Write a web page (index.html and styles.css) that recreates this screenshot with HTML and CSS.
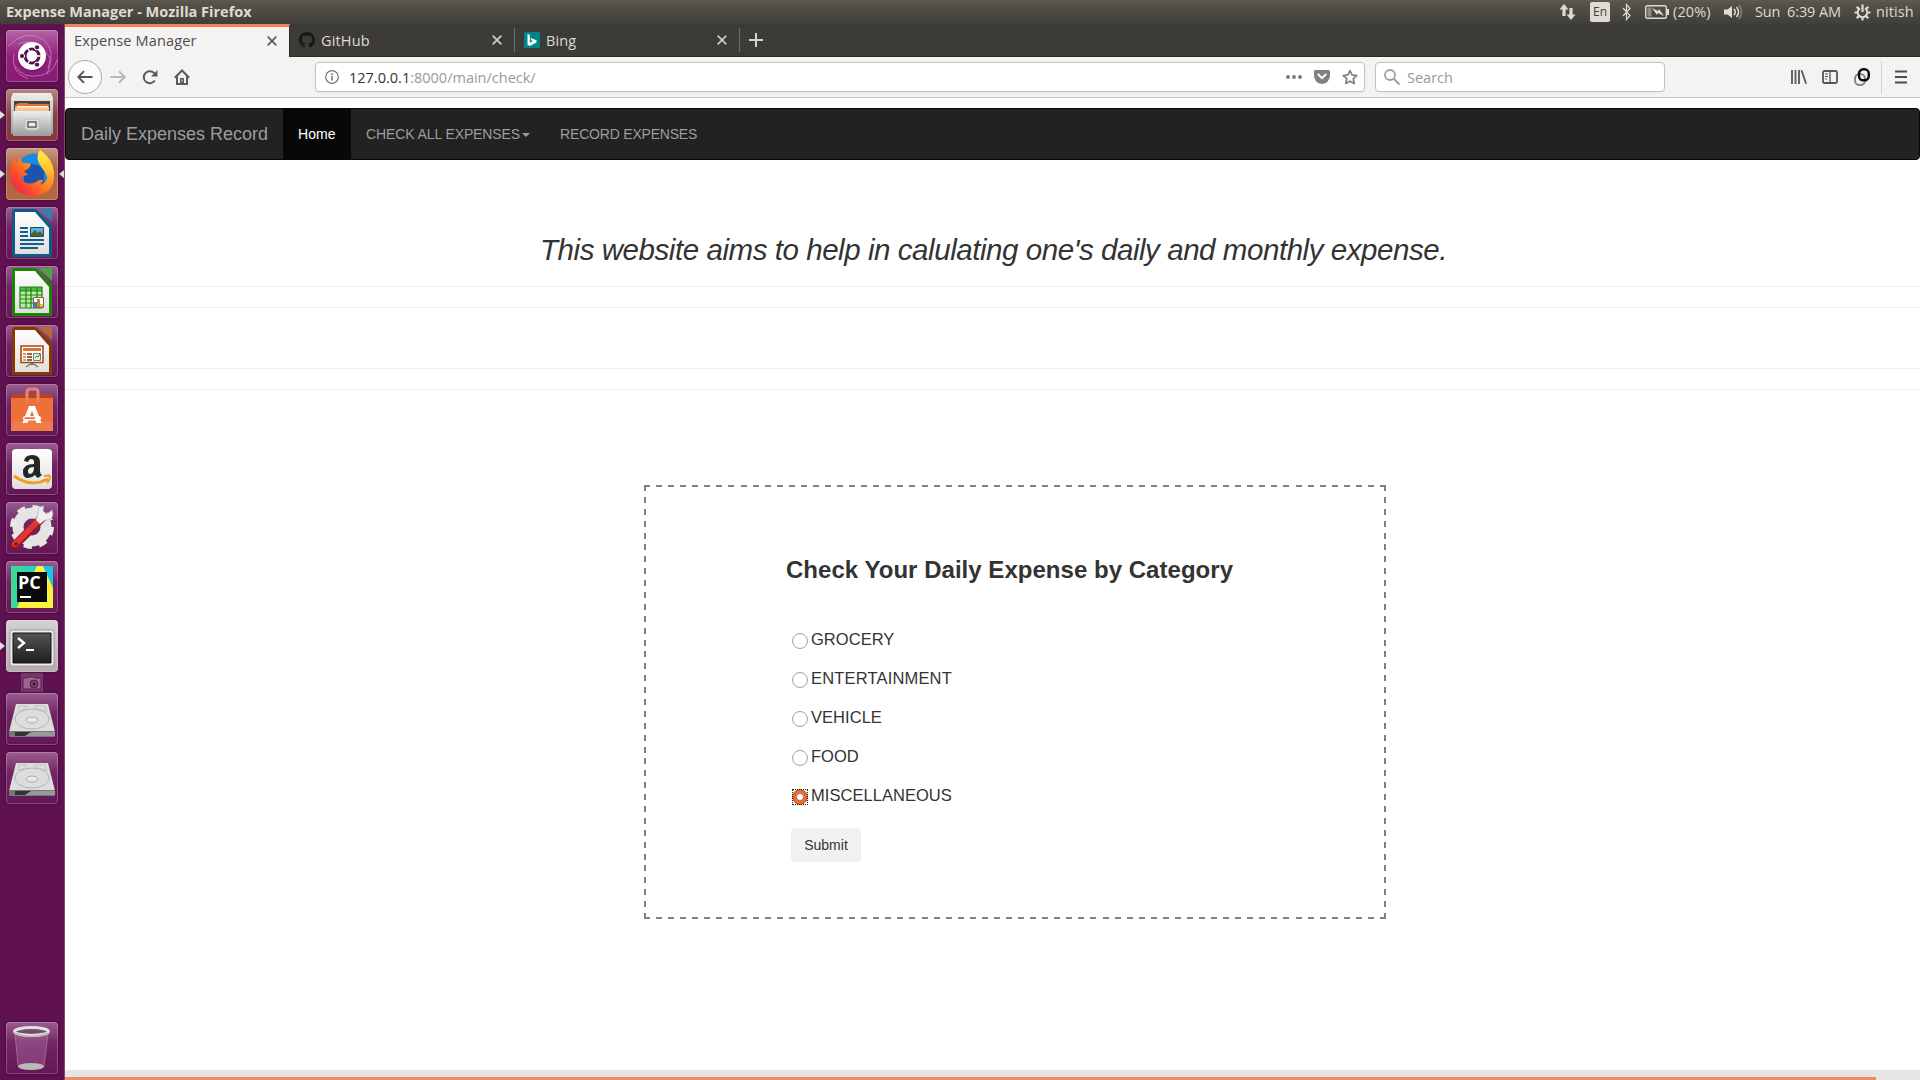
FILE: index.html
```html
<!DOCTYPE html>
<html lang="en">
<head>
<meta charset="utf-8">
<title>Expense Manager</title>
<link rel="stylesheet" href="styles.css">
</head>
<body>
<header class="panel">
  <span class="panel-title">Expense Manager - Mozilla Firefox</span>
  <div class="indicators">
    <svg class="ind-net" width="17" height="16" viewBox="0 0 17 16"><path d="M5 0 9.500 5.500H6.600V12H3.400V5.500H.5zM12 16 7.500 10.500h2.900V4h3.200v6.500h2.900z" fill="#dfdbd2"/></svg>
    <span class="ind-lang">En</span>
    <svg class="ind-bt" width="10" height="18" viewBox="0 0 10 18"><path d="M1 5l7 7.500L4.500 16.500V1.500L8 5.500 1 13" fill="none" stroke="#dfdbd2" stroke-width="1.200"/></svg>
    <svg class="ind-bat" width="24" height="14" viewBox="0 0 24 14"><rect x=".7" y=".7" width="20.600" height="12.600" rx="1.500" fill="none" stroke="#dfdbd2" stroke-width="1.400"/><path d="M22 4h2v6h-2z" fill="#dfdbd2"/><path d="M2.500 2.500h4v9h-4z" fill="#8f8c84"/><path d="M7 3l6 3 1-2 5 7-6-3-1 2z" fill="#dfdbd2"/></svg>
    <span class="ind-pct">(20%)</span>
    <svg class="ind-vol" width="20" height="16" viewBox="0 0 20 16"><path d="M1 5.500h3.500L9 2v12l-4.500-3.500H1z" fill="#dfdbd2"/><path d="M11 5q2.500 3 0 6M13.500 3q4 5 0 10" fill="none" stroke="#dfdbd2" stroke-width="1.500"/><path d="M16 1q5 7 0 14" fill="none" stroke="#85827a" stroke-width="1.500"/></svg>
    <span class="ind-day">Sun</span>
    <span class="ind-time">6:39 AM</span>
    <svg class="ind-gear" width="17" height="17" viewBox="0 0 17 17"><path d="M6 4.300a4.800 4.800 0 1 0 5 0" fill="none" stroke="#dfdbd2" stroke-width="2"/><path d="M8.500.500v7.500M.5 8.500h3M13.500 8.500h3M2.700 2.700l2.300 2.300M14.300 2.700 12 5M2.700 14.300 5 12M14.300 14.300 12 12M8.500 13.500v3" stroke="#dfdbd2" stroke-width="2.200"/></svg>
    <span class="ind-user">nitish</span>
  </div>
</header>
<div class="desktop">
<nav class="launcher">
  <svg width="0" height="0" class="defs"><defs>
    <linearGradient id="silver" x1="0" y1="0" x2="0" y2="1"><stop offset="0" stop-color="#eee"/><stop offset="1" stop-color="#9c9c9c"/></linearGradient>
    <linearGradient id="paper" x1="0" y1="0" x2="0" y2="1"><stop offset="0" stop-color="#fff"/><stop offset="1" stop-color="#dedede"/></linearGradient>
    <linearGradient id="flame" x1="1" y1="0" x2="0" y2="1"><stop offset="0" stop-color="#fff04a"/><stop offset=".4" stop-color="#ff9a1c"/><stop offset=".7" stop-color="#ff4a2b"/><stop offset="1" stop-color="#e31566"/></linearGradient>
    <linearGradient id="tail" x1="0" y1="0" x2="0" y2="1"><stop offset="0" stop-color="#fff04a"/><stop offset=".5" stop-color="#ffc52c"/><stop offset="1" stop-color="#ff7a22"/></linearGradient>
    <linearGradient id="screen" x1="0" y1="0" x2="0" y2="1"><stop offset="0" stop-color="#555"/><stop offset="1" stop-color="#1e1e1e"/></linearGradient>
    <linearGradient id="pych" x1="0" y1="0" x2="1" y2="0"><stop offset="0" stop-color="#3ddc91"/><stop offset="1" stop-color="#19c8e0"/></linearGradient>
  </defs></svg>
  <div class="tile tile-dash"><svg width="52" height="52" viewBox="0 0 52 52"><g fill="none" stroke="#e3a5d4" stroke-opacity=".55"><path d="M2 16Q20-2 38 10Q50 22 42 38"/><path d="M12 14Q30 6 44 28Q45 36 41 44"/><path d="M8 24Q4 42 22 49M9 36Q18 50 36 45Q48 42 51 30"/></g><circle cx="26" cy="27" r="14.500" fill="#5a114c" opacity=".5"/><circle cx="26" cy="26" r="14" fill="#fff"/><circle cx="26" cy="26" r="7" fill="none" stroke="#5a114c" stroke-width="3.200"/><path d="M26 26H36M26 26l-5-9M26 26l-5 9" stroke="#fff" stroke-width="1.500"/><circle cx="26" cy="26" r="5.400" fill="#fff"/><g fill="#5a114c" stroke="#fff"><circle cx="16" cy="26" r="2.600"/><circle cx="31" cy="17.400" r="2.600"/><circle cx="31" cy="34.600" r="2.600"/></g></svg></div>
  <div class="tile tile-files running"><svg width="52" height="52" viewBox="0 0 52 52"><path d="M7 4h38l2 5v36H5V9z" fill="url(#silver)"/><path d="M8 12h36v12H8z" fill="#444"/><path d="M9 16l4-2h8l2 1h20v8H9z" fill="#e5713a"/><path d="M9 18h34v4H9z" fill="#f6c490"/><path d="M11 17h31v1.500H11z" fill="#fff3e0"/><path d="M7 22h38v25H7z" fill="url(#silver)"/><rect x="19" y="30" width="14" height="11" rx="2" fill="#ddd" stroke="#bbb"/><rect x="22" y="33" width="8" height="5" fill="#eee" stroke="#555" stroke-width="1.400"/></svg></div>
  <div class="tile tile-firefox running focused"><svg width="52" height="52" viewBox="0 0 52 52"><circle cx="28" cy="22" r="16.500" fill="#1889e4"/><path d="M18 18Q28 12 38 22v14H18z" fill="#1b54ae"/><path d="M34 2Q47 11 48 25Q49 47 26 48Q4 46 4 25Q5 15 9 9l1 6 5-5 1 5q4-1 9 1-1 5-7 7l4 4q-6 0-6 5 6 6 14 2 4-3 7-2-1 4-5 5 9-1 10-10 1-8-5-14Q29 9 34 2z" fill="url(#flame)"/><path d="M34 2Q47 11 48 25 48 34 43 40 43 28 36 20 28 10 34 2z" fill="url(#tail)"/></svg></div>
  <div class="tile"><svg width="52" height="52" viewBox="0 0 52 52"><path d="M8 2h22l16 17v31H6V4z" fill="#0e5b88"/><path d="M33 2h13v13z" fill="#2e83ae"/><path d="M9 5h20l14 16v26H9z" fill="url(#paper)"/><path d="M14 21h8M14 25h8M14 29h8M14 33h24M14 37h24M14 41h18" stroke="#155e8b" stroke-width="2"/><path d="M24.500 20.500h13v9h-13z" fill="#54b5e6" stroke="#164c6b"/><path d="M25 29v-2l4-4 3 3 2-2 3 3v2z" fill="#55612d"/></svg></div>
  <div class="tile"><svg width="52" height="52" viewBox="0 0 52 52"><path d="M8 2h22l16 17v31H6V4z" fill="#1c8506"/><path d="M33 2h13v13z" fill="#4ba83d"/><path d="M9 5h20l14 16v26H9z" fill="url(#paper)"/><path d="M14 21h22v21H14z" fill="#b9eaac"/><path d="M14 21h22v4H14z" fill="#54b84b"/><path d="M14 21h22v21H14zM14 25h22M14 29h22M14 33h22M14 37h22M20 21v21M25 21v21M31 21v21" fill="none" stroke="#1c8506" stroke-width="1.200"/><path d="M27.500 31.500h10v10h-10z" fill="#fff" stroke="#666"/><path d="M28 36h3v5h-3z" fill="#3083c6"/><path d="M31 33h3v8h-3z" fill="#e17525"/><path d="M34 38h3v3h-3z" fill="#ecc414"/></svg></div>
  <div class="tile"><svg width="52" height="52" viewBox="0 0 52 52"><path d="M8 2h22l16 17v31H6V4z" fill="#873900"/><path d="M33 2h13v13z" fill="#b76a38"/><path d="M9 5h20l14 16v26H9z" fill="url(#paper)"/><path d="M26 38l-6 4M26 38l6 4M26 38v2" stroke="#777" stroke-width="1.500"/><path d="M15 21h22v16.500H15z" fill="#fff" stroke="#a84a16" stroke-width="1.600"/><path d="M17 23h18v3H17z" fill="#dc7135"/><path d="M17 29h3M17 32h3M17 35h3" stroke="#dc7135" stroke-width="1.500"/><path d="M21 29h5M21 32h5M21 35h5" stroke="#7a3200" stroke-width="1.500"/><path d="M27.500 28.500h7v7h-7z" fill="#def2d9" stroke="#777"/><path d="M29 33l2-2 1 1 2-3" fill="none" stroke="#2d8a22"/></svg></div>
  <div class="tile"><svg width="52" height="52" viewBox="0 0 52 52"><path d="M5 14l2-4h38l2 4z" fill="#b34725"/><path d="M5 14h42v33H5z" fill="#ee6f37"/><path d="M5 37h42v10H5z" fill="#f07c47"/><path d="M21 18V8q0-3 3-3h5q3 0 3 3v10" fill="none" stroke="#e98463" stroke-width="3"/><path d="M23 22h6l6.500 17h-5l-4.500-12.500L21.500 39h-5z" fill="#fff"/><rect x="17" y="32" width="18" height="4.500" rx="2" fill="#fff"/><path d="M18.500 34.200h10.500" stroke="#ee6f37" stroke-width="1.800"/></svg></div>
  <div class="tile"><svg width="52" height="52" viewBox="0 0 52 52"><rect x="6" y="6" width="40" height="40" rx="4" fill="url(#paper)"/><path d="M18 18q1-6 8-6 8 0 8 7v9q0 3 2 4l-4 3q-2-1-3-3-3 3-7 3-5 0-5-6 0-8 11-8v-2q0-3-3-3-2 0-3 3zM28 24q-6 0-6 4 0 3 2 3 4 0 4-7z" fill="#252525"/><path d="M8 33q17 12 34 3" fill="none" stroke="#f49b1c" stroke-width="2.800"/><path d="M38 33q6-1 6 0 0 4-3 7" fill="none" stroke="#f49b1c" stroke-width="1.800"/></svg></div>
  <div class="tile"><svg width="52" height="52" viewBox="0 0 52 52"><circle cx="26" cy="25" r="14" fill="none" stroke="#e4e4e4" stroke-width="11"/><circle cx="26" cy="25" r="19.500" fill="none" stroke="#e8e8e8" stroke-width="5" stroke-dasharray="8 7.300"/><path d="M9 43 36 16" stroke="#9d1719" stroke-width="8.500" stroke-linecap="round"/><path d="M9 42 34 17" stroke="#d93835" stroke-width="6" stroke-linecap="round"/><path d="M30 18l4 4 5-4q7 1 8-6l-1-4-5 4-4-3 1-5q-7 0-6 8z" fill="#eee" stroke="#aaa" stroke-width=".7"/><circle cx="10" cy="42" r="1.800" fill="#7d1111"/></svg></div>
  <div class="tile"><svg width="52" height="52" viewBox="0 0 52 52"><path d="M5 5h42v42H5z" fill="url(#pych)"/><path d="M31 5h6l10 20v22H11z" fill="#fcf23d"/><path d="M37 5h10v22z" fill="#1bc5e2"/><path d="M11 11h30v30H11z" fill="#0a0a0a"/><path d="M14 36h11" stroke="#fff" stroke-width="2"/><text x="12" y="28" class="pc">PC</text></svg></div>
  <div class="tile tile-term running"><svg width="52" height="52" viewBox="0 0 52 52"><rect x="4" y="10" width="44" height="36" rx="2" fill="#eee" stroke="#999"/><path d="M7 13h38v30H7z" fill="url(#screen)" stroke="#111"/><path d="M12 18l6 5-6 5" fill="none" stroke="#fff" stroke-width="2.400"/><path d="M20 30h8" stroke="#fff" stroke-width="2"/></svg></div>
  <svg class="mini" width="22" height="19" viewBox="0 0 22 19"><path d="M0 0h22v19H0z" fill="#783a6c"/><path d="M2 5h4l1-1h6l1 1h6v11H2z" fill="#9a678f" stroke="#5c1c50"/><circle cx="13" cy="11" r="4" fill="#7c4272" stroke="#4a1942"/><circle cx="13" cy="11" r="1.500" fill="#3f1239"/></svg>
  <div class="tile"><svg width="52" height="52" viewBox="0 0 52 52"><path d="M10 11h32l7 28H3z" fill="#ddd"/><path d="M3 38h46v5q0 1-1 1H4q-1 0-1-1z" fill="#777"/><path d="M9 39h34v4H9z" fill="#333"/><path d="M25 39h24v4H19z" fill="#999"/><ellipse cx="26" cy="26" rx="17" ry="10" fill="none" stroke="#b5b5b5"/><ellipse cx="26" cy="27" rx="6" ry="3" fill="#e8e8e8" stroke="#aaa"/><path d="M13 13h8q-1 4-9 5zM28 13h11l2 6q-4-3-10-3z" fill="none" stroke="#bebebe" stroke-width=".8"/></svg></div>
  <div class="tile"><svg width="52" height="52" viewBox="0 0 52 52"><path d="M10 11h32l7 28H3z" fill="#ddd"/><path d="M3 38h46v5q0 1-1 1H4q-1 0-1-1z" fill="#777"/><path d="M9 39h34v4H9z" fill="#333"/><path d="M25 39h24v4H19z" fill="#999"/><ellipse cx="26" cy="26" rx="17" ry="10" fill="none" stroke="#b5b5b5"/><ellipse cx="26" cy="27" rx="6" ry="3" fill="#e8e8e8" stroke="#aaa"/><path d="M13 13h8q-1 4-9 5zM28 13h11l2 6q-4-3-10-3z" fill="none" stroke="#bebebe" stroke-width=".8"/></svg></div>
  <div class="tile tile-trash"><svg width="52" height="52" viewBox="0 0 52 52"><path d="M9 11h33l-4 33q-13 5-26 0z" fill="#d6a5cd" fill-opacity=".25"/><path d="M9 12l3 32M42 12l-4 32" stroke="#b68bae" stroke-opacity=".6"/><ellipse cx="25" cy="44.500" rx="13" ry="3.500" fill="#b9b9b9"/><ellipse cx="25.500" cy="9.500" rx="17" ry="4" fill="#7b4a72" stroke="#e2e2e2" stroke-width="3"/><path d="M8 11q17 7 35 0" fill="none" stroke="#b5b5b5" stroke-width="1.500"/></svg></div>
</nav>
<main class="window">
  <div class="tabs">
    <div class="tab active"><span>Expense Manager</span><svg class="close" width="10" height="10" viewBox="0 0 10 10"><path d="M.7.700l8.600 8.600M9.300.700.700 9.300"/></svg></div>
    <div class="tab"><svg class="fav" width="16" height="16" viewBox="0 0 16 16"><path fill="#191717" d="M8 0C3.580 0 0 3.580 0 8c0 3.540 2.290 6.530 5.470 7.590.4.070.550-.17.550-.38 0-.19-.01-.82-.01-1.490-2.010.37-2.530-.49-2.690-.94-.09-.23-.48-.94-.82-1.130-.28-.15-.68-.52-.01-.53.630-.01 1.080.580 1.230.820.720 1.210 1.870.870 2.330.660.070-.52.280-.87.510-1.070-1.780-.2-3.640-.89-3.640-3.950 0-.87.310-1.590.820-2.150-.08-.2-.36-1.020.080-2.120 0 0 .67-.21 2.200.820.640-.18 1.320-.27 2-.27s1.360.090 2 .27c1.530-1.040 2.200-.82 2.200-.82.440 1.100.160 1.920.080 2.120.510.560.820 1.270.820 2.150 0 3.070-1.870 3.750-3.650 3.950.290.250.540.730.540 1.480 0 1.070-.01 1.930-.01 2.200 0 .21.150.460.550.380A8.010 8.010 0 0 0 16 8c0-4.420-3.580-8-8-8z"/></svg><span>GitHub</span><svg class="close" width="10" height="10" viewBox="0 0 10 10"><path d="M.7.700l8.600 8.600M9.300.700.700 9.300"/></svg></div>
    <div class="tab"><svg class="fav" width="16" height="16" viewBox="0 0 16 16"><path d="M0 0h16v16H0z" fill="#008489"/><path d="M3.500 2l2.300.8v7.900l3-1.700-1.500-.7-1-2.300 6.200 2.200v2.400L5.800 14l-2.300-1.300z" fill="#fff"/></svg><span>Bing</span><svg class="close" width="10" height="10" viewBox="0 0 10 10"><path d="M.7.700l8.600 8.600M9.300.700.700 9.300"/></svg></div>
    <svg class="plus" width="14" height="14" viewBox="0 0 14 14"><path d="M7 0v14M0 7h14" stroke="#d5d2cc" stroke-width="2"/></svg>
  </div>
  <div class="toolbar">
    <span class="back"><svg width="16" height="14" viewBox="0 0 16 14"><path d="M15.500 7H1.500M7 1.200 1.300 7 7 12.800" fill="none" stroke="#555" stroke-width="1.900"/></svg></span>
    <svg class="fwd" width="16" height="14" viewBox="0 0 16 14"><path d="M.5 7h14M9 1.200 14.700 7 9 12.800" fill="none" stroke="#b9b8b6" stroke-width="2"/></svg>
    <svg class="reload" width="16" height="16" viewBox="0 0 16 16"><path d="M12.800 11.500A6 6 0 1 1 12.500 4.500" fill="none" stroke="#5a5a5a" stroke-width="2"/><path d="M15.500 1v6.500H9z" fill="#5a5a5a"/></svg>
    <svg class="home" width="16" height="16" viewBox="0 0 16 16"><path d="M.8 8.700 8 1.500l7.200 7.200M3 7.500V15h10V7.500" fill="none" stroke="#5a5a5a" stroke-width="2"/><path d="M6 9h4v6H6z" fill="#5a5a5a"/><path d="M7.500 10.500h1v2h-1z" fill="#f3f2f1"/></svg>
    <div class="urlbar">
      <svg width="14" height="14" viewBox="0 0 14 14"><circle cx="7" cy="7" r="6.300" fill="none" stroke="#777" stroke-width="1.200"/><path d="M7 6v4.500M7 3.300v1.600" stroke="#777" stroke-width="1.600"/></svg>
      <span class="url"><b>127.0.0.1</b>:8000/main/check/</span>
      <svg class="dots" width="16" height="4" viewBox="0 0 16 4"><g fill="#777"><circle cx="2" cy="2" r="1.900"/><circle cx="8" cy="2" r="1.900"/><circle cx="14" cy="2" r="1.900"/></g></svg>
      <svg class="pocket" width="16" height="14" viewBox="0 0 16 14"><path d="M1.500 0h13Q16 0 16 1.500V6Q15 13.500 8 14 1 13.500 0 6V1.500Q0 0 1.500 0z" fill="#808080"/><path d="M4.300 4.500 8 8.200l3.700-3.700" fill="none" stroke="#fff" stroke-width="2" stroke-linecap="round"/></svg>
      <svg class="star" width="16" height="16" viewBox="0 0 16 16"><path d="M8 1.600l2 4.300 4.800.6-3.500 3.200.9 4.900L8 12.200l-4.200 2.400.9-4.900L1.200 6.500 6 5.900z" fill="none" stroke="#808080" stroke-width="1.700" stroke-linejoin="round"/></svg>
    </div>
    <div class="search"><svg width="16" height="16" viewBox="0 0 16 16"><circle cx="6" cy="6" r="5" fill="none" stroke="#a0a0a0" stroke-width="1.800"/><path d="M9.500 9.500l6 6" stroke="#a0a0a0" stroke-width="2"/></svg><span>Search</span></div>
    <svg class="lib" width="16" height="14" viewBox="0 0 16 14"><path d="M1 0v14M4.500 0v14M8 0v14M10.500.300l4.600 13.400" fill="none" stroke="#5e5e5e" stroke-width="1.900"/></svg>
    <svg class="side" width="16" height="14" viewBox="0 0 16 14"><rect x="1" y="1" width="14" height="12" rx="1.500" fill="none" stroke="#555" stroke-width="1.800"/><path d="M8 1v12" stroke="#555" stroke-width="1.300"/><path d="M3 4h3M3 6.500h3M3 9h2" stroke="#555"/></svg>
    <svg class="chain" width="16" height="18" viewBox="0 0 16 18"><rect x="1" y="6" width="10" height="11" rx="4.500" fill="none" stroke="#888" stroke-width="2"/><rect x="5" y="1.300" width="9.800" height="11" rx="4.300" fill="none" stroke="#0b0b0b" stroke-width="2.400"/></svg>
    <span class="sep"></span>
    <svg class="menu" width="12" height="14" viewBox="0 0 12 14"><path d="M0 1.500h12M0 7h12M0 12.500h12" stroke="#4e4e4e" stroke-width="1.800"/></svg>
  </div>
  <section class="page">
    <nav class="navbar">
      <a class="brand">Daily Expenses Record</a>
      <a class="link current">Home</a>
      <a class="link">CHECK ALL EXPENSES<i class="caret"></i></a>
      <a class="link record">RECORD EXPENSES</a>
    </nav>
    <h2 class="intro">This website aims to help in calulating one's daily and monthly expense.</h2>
    <hr><hr><hr class="far"><hr>
    <form class="card">
      <h3>Check Your Daily Expense by Category</h3>
      <label><i class="radio"></i>GROCERY</label>
      <label class="wide"><i class="radio"></i>ENTERTAINMENT</label>
      <label><i class="radio"></i>VEHICLE</label>
      <label><i class="radio"></i>FOOD</label>
      <label><i class="radio on"></i>MISCELLANEOUS</label>
      <button type="button">Submit</button>
    </form>
    <div class="scroll"><div class="thumb"></div></div>
  </section>
</main>
</div>
</body>
</html>
```
FILE: styles.css
```css
* { box-sizing: border-box; }
body { margin: 0; width: 1920px; height: 1080px; overflow: hidden; background: #fff; font-family: "Open Sans", "Noto Sans", sans-serif; font-size: 14.500px; }
svg { display: block; flex: none; }
span { white-space: nowrap; }

.panel { height: 24px; display: flex; align-items: center; justify-content: space-between; padding: 0 5px 0 6px; background: linear-gradient(#5e5b50, #55534a 15%, #3f3e39); color: #dfdbd2; line-height: 24px; }
.panel-title { font-weight: 700; }
.indicators { display: flex; align-items: center; height: 24px; }
.ind-lang { width: 20px; height: 20px; margin: 0 12px 0 14px; border-radius: 2px; background: #dfdbd2; color: #3f3e39; font-size: 12px; line-height: 20px; text-align: center; }
.ind-bat { margin: 0 4px 0 13px; }
.ind-pct { width: 37px; letter-spacing: .1px; }
.ind-vol { margin: 0 12px 0 13px; }
.ind-day { width: 25px; letter-spacing: -.2px; }
.ind-time { width: 54px; margin-left: 7px; letter-spacing: -.1px; }
.ind-gear { margin: 0 5px 0 13px; }
.ind-user { width: 39px; letter-spacing: .1px; }

.desktop { display: flex; height: 1056px; }
.launcher { width: 65px; padding: 6px 0 6px 6px; display: flex; flex-direction: column; gap: 7px; background: #5f1150; border-right: 1px solid #874679; }
.defs { position: absolute; }
.tile { position: relative; flex: none; width: 52px; height: 52px; border-radius: 4px; background: linear-gradient(#9a5d8e, #722565 40%, #641657); box-shadow: inset 0 0 0 1px rgba(255,255,255,.22), 0 0 3px rgba(30,0,25,.5); }
.tile-dash { background: linear-gradient(#b366a3, #94207f 50%, #861b75); }
.tile-files { background: linear-gradient(#b58585, #8a3f44 50%, #8a343f); }
.tile-firefox { background: linear-gradient(#c79a82, #ae6344 40%, #b26a43); }
.tile-term { background: linear-gradient(#d5d0d5, #b5abb3); }
.tile-trash { margin-top: auto; }
.running::before { content: ""; position: absolute; left: -6px; top: 22px; border: 4px solid transparent; border-left: 5px solid #ddd; border-right: 0; }
.focused::after { content: ""; position: absolute; right: -6px; top: 22px; border: 4px solid transparent; border-right: 5px solid #ddd; border-left: 0; }
.mini { margin: -6px 0 -6px 15px; }
.pc { font: 700 18px "Open Sans", sans-serif; fill: #fff; }

.window { flex: 1; display: flex; flex-direction: column; min-width: 0; }
.tabs { height: 33px; display: flex; align-items: center; background: #3c3b37; border-bottom: 1px solid #2c2b28; color: #dfdbd2; letter-spacing: .15px; }
.tab { height: 24px; display: flex; align-items: center; width: 225px; padding: 0 12px 0 9px; border-right: 1px solid #6f6d68; }
.tab.active { height: 33px; margin-bottom: -1px; padding-bottom: 3px; background: #f4f3f2; border-top: 3px solid #f0825c; border-right: 1px solid #2c2b28; color: #4c4c4c; }
.fav { margin-right: 6px; }
.close { margin-left: auto; fill: none; stroke: #cfccc5; stroke-width: 1.700px; }
.active .close { stroke: #5a5a5a; }
.plus { margin-left: 9px; }

.toolbar { height: 41px; display: flex; align-items: center; background: #f4f3f2; border-bottom: 1px solid #c6c5c4; color: #999; }
.back { width: 34px; height: 34px; margin-left: 3px; display: grid; place-items: center; background: #fcfcfc; border: 1px solid #aaa; border-radius: 50%; }
.fwd { margin-left: 8px; }
.reload { margin-left: 16px; }
.home { margin-left: 16px; }
.urlbar, .search { height: 30px; display: flex; align-items: center; background: #fff; border: 1px solid #c3c2c0; border-radius: 4px; box-shadow: 0 1px 3px rgba(0,0,0,.06); }
.urlbar { width: 1050px; margin-left: 125px; padding: 0 6px 0 9px; }
.url { margin-left: 10px; }
.url b { font-weight: 400; color: #333; }
.dots { margin-left: auto; }
.pocket, .star { margin-left: 12px; }
.search { width: 290px; margin-left: 10px; padding-left: 8px; }
.search span { margin-left: 7px; }
.lib { margin-left: 126px; }
.side { margin-left: 15px; }
.chain { margin-left: 16px; }
.sep { width: 1px; height: 33px; margin-left: 11px; background: #d2d1d0; }
.menu { margin-left: 13px; }

.page { flex: 1; display: flex; flex-direction: column; padding-top: 10px; font-family: "Liberation Sans", Arial, sans-serif; color: #333; }
.navbar { height: 52px; flex: none; display: flex; align-items: stretch; background: #222; border: 1px solid #080808; border-radius: 4px; color: #9d9d9d; }
.brand { width: 217px; padding-left: 15px; font-size: 18px; line-height: 50px; }
.link { padding: 0 15px; font-size: 14px; line-height: 50px; display: flex; align-items: center; letter-spacing: -.1px; }
.current { width: 68px; background: #080808; color: #fff; letter-spacing: .1px; }
.record { letter-spacing: -.2px; }
.caret { margin-left: 2px; margin-top: 2px; border: 4px solid transparent; border-top-color: #9d9d9d; border-bottom: 0; }
.intro { margin: 73px 0 19px; padding-left: 475px; font-size: 29.500px; font-style: italic; font-weight: 400; line-height: 34px; letter-spacing: -.44px; }
hr { width: 100%; height: 1px; flex: none; margin: 0 0 20px; border: 0; background: #eee; }
hr.far { margin-top: 40px; }
.card { width: 742px; height: 434px; flex: none; margin: 75px 0 0 579px; padding: 70px 0 0 142px;
  background:
    repeating-linear-gradient(90deg, #808080 0 6px, transparent 6px 12.066px) top / 100% 2px no-repeat,
    repeating-linear-gradient(90deg, #808080 0 6px, transparent 6px 12.066px) bottom / 100% 2px no-repeat,
    repeating-linear-gradient(#808080 0 6px, transparent 6px 11.889px) left / 2px 100% no-repeat,
    repeating-linear-gradient(#808080 0 6px, transparent 6px 11.889px) right / 2px 100% no-repeat; }
.card h3 { margin: 0 0 43px; font-size: 24px; line-height: 30px; letter-spacing: .03px; }
.card label { display: flex; align-items: center; height: 22px; margin: 0 0 17px 6px; font-size: 16.500px; line-height: 22px; letter-spacing: .04px; }
.card .wide { letter-spacing: .17px; }
.radio { width: 16px; height: 16px; margin: 3px 3px 0 0; border: 1px solid #a3a3a3; border-radius: 50%; background: #fff; }
.radio.on { border: 0; border-radius: 0; outline: 1px dotted #222; outline-offset: -1px; background: radial-gradient(circle, #fff 0 2.500px, #e0703f 3.500px 6px, #cf5826 7.500px, transparent 8px); }
.card button { display: block; width: 70px; height: 34px; margin: 22px 0 0 5px; padding: 0; border: 0; border-radius: 4px; background: #f2f1f0; color: #333; font: 14px "Liberation Sans", Arial, sans-serif; }
.scroll { height: 10px; margin-top: auto; padding-top: 7px; background: #e5e5e5; }
.thumb { width: 1811px; height: 3px; background: #f08c64; }
```
